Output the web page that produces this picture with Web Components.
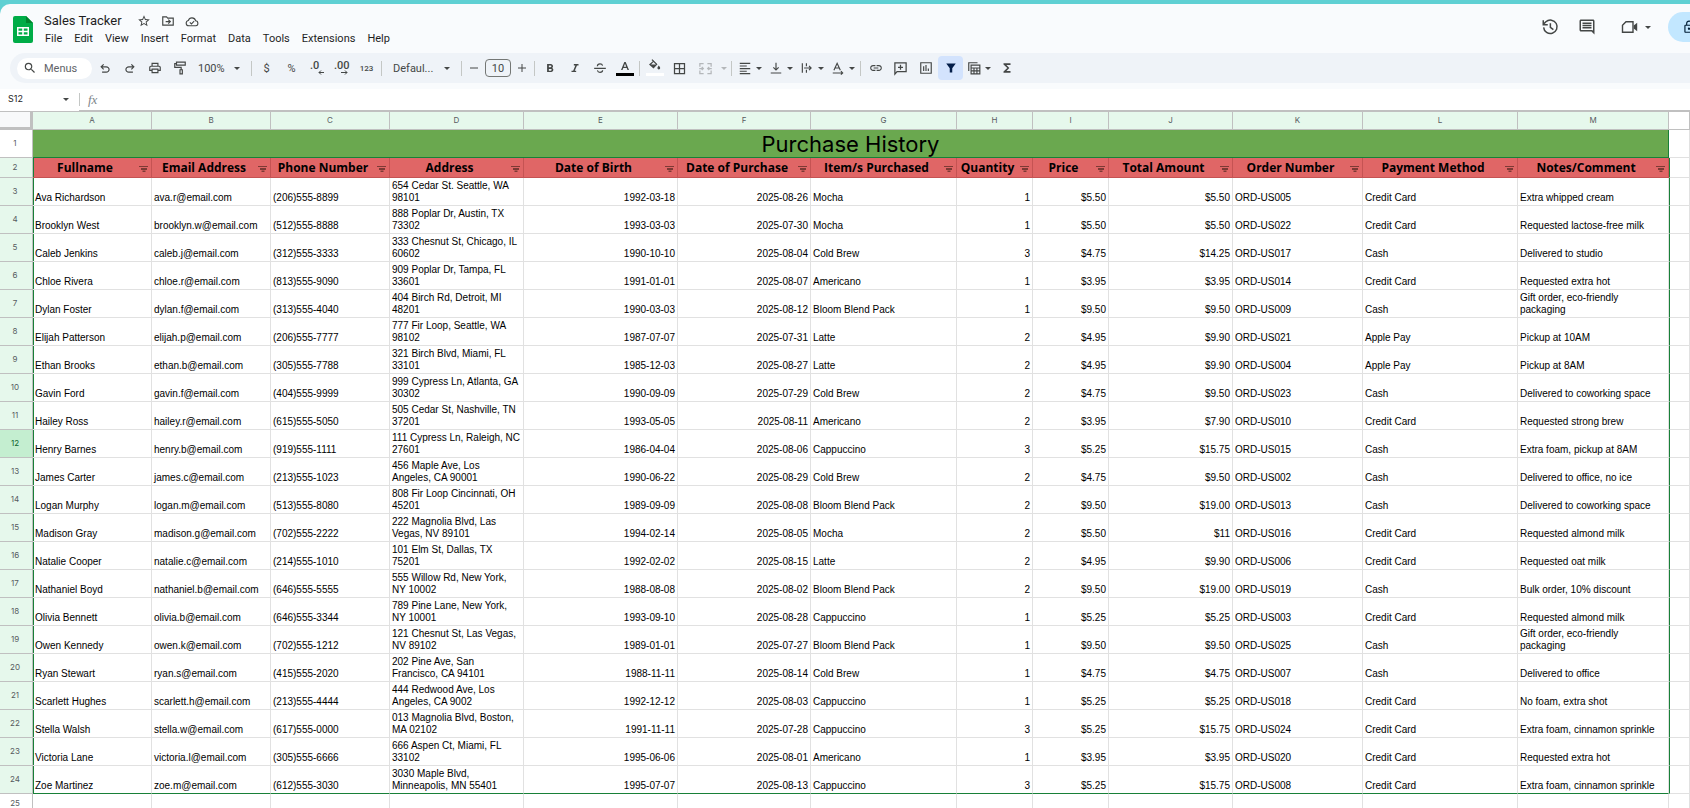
<!DOCTYPE html>
<html lang="en">
<head>
<meta charset="utf-8">
<title>Sales Tracker</title>
<style>
  html, body { margin: 0; height: 100%; }
  body { background: #5fd0d3; font-family: Roboto, "Liberation Sans", sans-serif; color: #1f1f1f; overflow: hidden; }
</style>
</head>
<body>
<sheet-app></sheet-app>
<script>
const define = (name, html, setup) => {
  const template = document.createElement('template');
  template.innerHTML = html;
  customElements.define(name, class extends HTMLElement {
    constructor() {
      super();
      this.attachShadow({ mode: 'open' }).append(template.content.cloneNode(true));
    }
    connectedCallback() { if (setup) setup(this, this.shadowRoot); }
  });
};

/* name: [viewBox width, viewBox height, markup] */
const fill = d => `<path fill="currentColor" d="${d}"/>`;
const line = (d, w = 2) => `<path fill="none" stroke="currentColor" stroke-width="${w}" d="${d}"/>`;
const ICONS = {
  sheets: [20, 27, '<path fill="#00ac47" d="M2 0h11l7 7v18a2 2 0 0 1-2 2H2a2 2 0 0 1-2-2V2a2 2 0 0 1 2-2z"/><path fill="#00832d" d="M13 0l7 7h-7z"/><path fill="#fff" fill-rule="evenodd" d="M4 11h12v9H4zM5.500 12.500v2.200h3.700v-2.200zM10.800 12.500v2.200h3.700v-2.200zM5.500 16.300v2.200h3.700v-2.200zM10.800 16.300v2.200h3.700v-2.200z"/>'],
  star: [24, 24, fill('M22 9.240l-7.190-.62L12 2 9.190 8.630 2 9.240l5.460 4.730L5.820 21 12 17.270 18.180 21l-1.630-7.030L22 9.240zM12 15.400l-3.760 2.270 1-4.280-3.320-2.880 4.380-.38L12 6.100l1.710 4.040 4.380.38-3.320 2.880 1 4.280L12 15.400z')],
  folder: [24, 24, line('M3 19V5h6.500l2 2H21v12z') + line('M8 13h7M12.500 9.500L16 13l-3.500 3.500')],
  cloud: [26, 20, line('M7 18a5 5 0 0 1-.8-9.900A7 7 0 0 1 19.600 8.500 4.800 4.800 0 0 1 20 18zM9 11.500l3 3 5-5')],
  history: [24, 24, line('M3.500 12.500A9 9 0 1 0 6.500 5L3 8.500M3 3v6h6M12.500 7v5.500l4 3')],
  comment: [24, 24, fill('M22 4c0-1.100-.9-2-2-2H4c-1.100 0-2 .9-2 2v12c0 1.100.9 2 2 2h14l4 4V4zM20 17l-1-1H4V4h16v13zM6 12h12v2H6zM6 9h12v2H6zM6 6h12v2H6z')],
  meet: [24, 20, line('M7 2.500h10v15H2V7.500z') + fill('M18 8l5-4v12l-5-4z')],
  lock: [24, 24, fill('M18 8h-1V6c0-2.760-2.240-5-5-5S7 3.240 7 6v2H6c-1.100 0-2 .9-2 2v10c0 1.100.9 2 2 2h12c1.100 0 2-.9 2-2V10c0-1.100-.9-2-2-2zM9 6c0-1.660 1.340-3 3-3s3 1.340 3 3v2H9V6zm9 14H6V10h12v10zm-6-3c1.100 0 2-.9 2-2s-.9-2-2-2-2 .9-2 2 .9 2 2 2z')],
  caret: [6, 3, fill('M0 0h6L3 3z')],
  search: [24, 24, fill('M15.500 14h-.79l-.28-.27A6.471 6.471 0 0 0 16 9.500 6.500 6.500 0 1 0 9.500 16c1.610 0 3.090-.59 4.230-1.570l.27.28v.79l5 4.990L20.490 19l-4.990-5zm-6 0C7.010 14 5 11.990 5 9.500S7.010 5 9.500 5 14 7.010 14 9.500 11.990 14 9.500 14z')],
  undo: [24, 24, fill('M7 20v-2h7.100q1.575 0 2.738-1T18 14.500T16.838 12T14.100 11H7.800l2.600 2.600L9 15L4 10l5-5l1.400 1.400L7.800 9h6.300q2.425 0 4.163 1.575T20 14.500t-1.737 3.925T14.100 20z')],
  redo: [24, 24, '<g transform="translate(24 0) scale(-1 1)">' + fill('M7 20v-2h7.100q1.575 0 2.738-1T18 14.500T16.838 12T14.100 11H7.800l2.600 2.600L9 15L4 10l5-5l1.400 1.400L7.800 9h6.300q2.425 0 4.163 1.575T20 14.500t-1.737 3.925T14.100 20z') + '</g>'],
  print: [24, 24, fill('M19 8h-1V3H6v5H5c-1.660 0-3 1.340-3 3v6h4v4h12v-4h4v-6c0-1.660-1.340-3-3-3zM8 5h8v3H8V5zm8 12v2H8v-4h8v2zm2-2v-2H6v2H4v-4c0-.55.45-1 1-1h14c.55 0 1 .45 1 1v4h-2z')],
  paint: [24, 24, line('M6 2h15v5H6zM6 4.500H3V11h11v4M12 15h4v7h-4z')],
  decless: [16, 16, '<text x="1" y="9" font-size="11" font-weight="500" fill="currentColor">.0</text>' + line('M15 12.500H10M12 10.500l-2 2 2 2', 1)],
  decmore: [16, 16, '<text x="0" y="9" font-size="11" font-weight="500" fill="currentColor">.00</text>' + line('M7 12.500h6M11 10.500l2 2-2 2', 1)],
  minus: [10, 10, line('M1 5h8', 1)],
  plus: [10, 10, line('M1 5h8M5 1v8', 1)],
  bold: [24, 24, fill('M15.600 11.790c.97-.67 1.650-1.770 1.650-2.790 0-2.260-1.750-4-4-4H7v14h7.040c2.090 0 3.710-1.700 3.710-3.790 0-1.520-.86-2.820-2.150-3.420zM10 7.500h3c.83 0 1.500.67 1.500 1.500s-.67 1.500-1.500 1.500h-3v-3zm3.500 9H10v-3h3.500c.83 0 1.500.67 1.500 1.500s-.67 1.500-1.500 1.500z')],
  italic: [24, 24, fill('M10 5v2.500h2.600L8.800 16.500H6V19h8v-2.500h-2.400L15.400 7.500H18V5z')],
  strike: [24, 24, line('M2 12.500h20M7.500 9c0-2.500 2-4 4.500-4s4 1.300 4.500 3M7.500 16c.5 2 2.200 3.500 4.500 3.500s4.500-1.300 4.500-3.500')],
  textcolor: [18, 18, fill('M5 11L8.300 3h1.400L13 11h-1.500l-.8-2H7.300l-.8 2zM7.800 7.800h2.400L9 4.700z') + '<path fill="#000" d="M0 14h18v3H0z"/>'],
  fillcolor: [18, 18, fill('M5.500 1l1-.8 5 5-4 4.300L3 5.500 6.800 2.300zM5 5.500h5L7.500 3zM12.800 6.500s1.400 1.600 1.400 2.500a1.400 1.400 0 0 1-2.800 0c0-.9 1.400-2.500 1.400-2.500z') + '<path fill="#fff" d="M0 14h18v3H0z"/>'],
  borders: [24, 24, line('M4 4h16v16H4zM12 4v16M4 12h16')],
  merge: [24, 24, line('M3 9V4h6M15 4h6v5M3 15v5h6M15 20h6v-5M2 12h6M22 12h-6M6 9.500L8.500 12 6 14.500M18 9.500L15.500 12l2.500 2.500')],
  align: [24, 24, line('M3 4h18M3 8.500h12M3 13h18M3 17.500h12M3 21.500h18')],
  valign: [24, 24, line('M3 20.500h18M12 3v12M7.500 11l4.500 4.500 4.500-4.500')],
  wrap: [24, 24, line('M4 4v16M11 4v5M11 15v5M7 12h12M15.500 8.500L19 12l-3.500 3.500')],
  rotate: [24, 24, line('M5 16L10.500 4 16 16M7 12h7M3 20.500h17M17 17.500l3 3-3 3')],
  link: [24, 24, fill('M3.900 12c0-1.710 1.390-3.100 3.100-3.100h4V7H7c-2.760 0-5 2.240-5 5s2.240 5 5 5h4v-1.900H7c-1.710 0-3.100-1.390-3.100-3.100zM8 13h8v-2H8v2zm9-6h-4v1.900h4c1.710 0 3.100 1.390 3.100 3.100s-1.390 3.100-3.100 3.100h-4V17h4c2.760 0 5-2.240 5-5s-2.240-5-5-5z')],
  addcomment: [24, 24, line('M3 21V3h18v14H6.500zM12 6v8M8 10h8')],
  chart: [24, 24, line('M3 3h18v18H3zM8 9v8M12 7v10M16 13v4')],
  filter: [24, 24, fill('M2.500 3h19L14.500 12.500V21h-5v-8.500z')],
  views: [24, 24, line('M3 17V3h15M7 7h15v15H7zM7 12h15M12 12v10M17 12v10M7 17h15')],
  sigma: [24, 24, fill('M18 4H6v2l6.500 6L6 18v2h12v-3h-7l5-5-5-5h7z')],
  sort: [9, 6, fill('M0 0h9v1H0zM2 2h6v2H2zM3.500 4.500h3V6h-3z')]
};
define('ui-icon', `<style>
  :host { display: inline-flex; flex: none; }
  svg { display: block; overflow: visible; font-family: Roboto, sans-serif; }
</style><svg aria-hidden="true"></svg>`, (host, root) => {
  const [w, h, body] = ICONS[host.getAttribute('name')];
  const width = +host.getAttribute('size') || w;
  const svg = root.querySelector('svg');
  svg.setAttribute('viewBox', `0 0 ${w} ${h}`);
  svg.setAttribute('width', width);
  svg.setAttribute('height', Math.round(width * h / w));
  svg.innerHTML = body;
});

define('tool-button', `<style>
  :host { display: flex; flex: none; width: 25px; height: 24px; }
  :host([narrow]) { width: 20px; }
  :host([menu]) { width: 31px; }
  :host([menu][disabled]) { width: 37px; }
  button { flex: 1; display: flex; align-items: center; justify-content: center; border: 0; padding: 0; background: none; font: inherit; color: #444746; border-radius: 4px; }
  :host([menu]) button { gap: 4px; }
  :host([menu][disabled]) button { gap: 8px; padding-left: 4px; }
  :host([disabled]) button { color: #b4b7ba; }
  :host([on]) button { background: #d3e3fd; color: #041e49; }
  .caret { display: none; }
  :host([menu]) .caret { display: inline-flex; }
</style><button type="button"><slot></slot><ui-icon class="caret" name="caret"></ui-icon></button>`, (host, root) => {
  const b = root.querySelector('button');
  b.setAttribute('aria-label', host.getAttribute('label'));
  b.disabled = host.hasAttribute('disabled');
});

define('tool-separator', `<style>
  :host { flex: none; width: 1px; height: 15px; margin: 0 2px; background: #c4c7c5; }
</style>`);

define('tool-select', `<style>
  :host { display: flex; flex: none; width: 57px; }
  :host([wide]) { width: 75px; }
  label { position: relative; flex: 1; display: flex; align-items: center; }
  select { appearance: none; flex: 1; min-width: 0; border: 0; background: none; margin: 0; padding: 0 16px 0 6px; height: 24px; font: inherit; color: #444746; }
  :host([wide]) select { padding-left: 9px; }
  ui-icon { position: absolute; right: 9px; color: #444746; pointer-events: none; }
</style><label><select></select><ui-icon name="caret"></ui-icon></label>`, (host, root) => {
  const s = root.querySelector('select');
  s.setAttribute('aria-label', host.getAttribute('label'));
  s.replaceChildren(new Option(host.getAttribute('value')));
});

define('app-header', `<style>
  :host { display: flex; justify-content: space-between; height: 49px; overflow: hidden; }
  .doc { display: flex; }
  .logo { margin: 12px 11px 0 13px; }
  .title { display: flex; align-items: center; gap: 10px; height: 20px; margin-top: 7px; }
  h1 { margin: 0 5px 0 0; font-size: 13px; line-height: 20px; font-weight: 400; color: #1f1f1f; }
  .title button, .actions button { border: 0; padding: 0; background: none; color: #444746; display: flex; align-items: center; }
  nav { display: flex; gap: 12px; margin-top: 1px; padding-left: 1px; }
  nav a { font-size: 11px; line-height: 14px; color: #1f1f1f; text-decoration: none; }
  .actions { flex: none; display: flex; align-items: center; width: 149px; height: 30px; margin-top: 8px; }
  .actions .history { margin-right: 19px; }
  .actions .meet { gap: 7px; margin-left: 25px; }
  .actions .share { flex: none; margin-left: 17px; width: 90px; height: 30px; padding-left: 14px; border-radius: 15px; background: #c2e7ff; color: #001d35; }
</style>
<div class="doc">
  <ui-icon class="logo" name="sheets"></ui-icon>
  <div>
    <div class="title"><h1>Sales Tracker</h1>
      <button type="button" aria-label="Star"><ui-icon name="star" size="14"></ui-icon></button>
      <button type="button" aria-label="Move"><ui-icon name="folder" size="14"></ui-icon></button>
      <button type="button" aria-label="Document status"><ui-icon name="cloud" size="14"></ui-icon></button>
    </div>
    <nav><a href="#">File</a><a href="#">Edit</a><a href="#">View</a><a href="#">Insert</a><a href="#">Format</a><a href="#">Data</a><a href="#">Tools</a><a href="#">Extensions</a><a href="#">Help</a></nav>
  </div>
</div>
<div class="actions">
  <button type="button" class="history" aria-label="Version history"><ui-icon name="history" size="18"></ui-icon></button>
  <button type="button" aria-label="Comments"><ui-icon name="comment" size="18"></ui-icon></button>
  <button type="button" class="meet" aria-label="Join a call"><ui-icon name="meet" size="17"></ui-icon><ui-icon name="caret"></ui-icon></button>
  <button type="button" class="share" aria-label="Share"><ui-icon name="lock" size="14"></ui-icon></button>
</div>`);

define('tool-bar', `<style>
  :host { display: flex; align-items: center; height: 30px; margin-left: 10px; padding-left: 7px; border-radius: 15px 0 0 15px; background: #eff3f8; font-size: 11px; color: #444746; }
  .search { display: flex; align-items: center; gap: 7px; flex: none; box-sizing: border-box; width: 75px; height: 21px; padding-left: 6px; border-radius: 11px; background: #fff; }
  .search input { border: 0; padding: 0; background: none; width: 34px; font: inherit; color: #444746; outline: 0; }
  .search input::placeholder { color: #5f6368; opacity: 1; }
  .size { box-sizing: border-box; width: 26px; height: 18px; margin: 0 1px; padding: 0; border: 1px solid #747775; border-radius: 4px; background: none; text-align: center; font: inherit; color: #444746; }
  .small { font-size: 8px; font-weight: 500; }
</style>
<label class="search"><ui-icon name="search" size="14"></ui-icon><input type="text" placeholder="Menus" aria-label="Menus"></label>
<tool-button label="Undo"><ui-icon name="undo" size="14"></ui-icon></tool-button>
<tool-button label="Redo"><ui-icon name="redo" size="14"></ui-icon></tool-button>
<tool-button label="Print"><ui-icon name="print" size="14"></ui-icon></tool-button>
<tool-button label="Paint format"><ui-icon name="paint" size="14"></ui-icon></tool-button>
<tool-select label="Zoom" value="100%"></tool-select>
<tool-separator></tool-separator>
<tool-button label="Currency">$</tool-button>
<tool-button label="Percent">%</tool-button>
<tool-button label="Decrease decimal places"><ui-icon name="decless"></ui-icon></tool-button>
<tool-button label="Increase decimal places"><ui-icon name="decmore"></ui-icon></tool-button>
<tool-button label="More formats" class="small">123</tool-button>
<tool-separator></tool-separator>
<tool-select wide label="Font" value="Defaul..."></tool-select>
<tool-separator></tool-separator>
<tool-button narrow label="Decrease font size"><ui-icon name="minus"></ui-icon></tool-button>
<input class="size" type="text" value="10" aria-label="Font size">
<tool-button narrow label="Increase font size"><ui-icon name="plus"></ui-icon></tool-button>
<tool-separator></tool-separator>
<tool-button label="Bold"><ui-icon name="bold" size="14"></ui-icon></tool-button>
<tool-button label="Italic"><ui-icon name="italic" size="14"></ui-icon></tool-button>
<tool-button label="Strikethrough"><ui-icon name="strike" size="14"></ui-icon></tool-button>
<tool-button label="Text color"><ui-icon name="textcolor"></ui-icon></tool-button>
<tool-separator></tool-separator>
<tool-button label="Fill color"><ui-icon name="fillcolor"></ui-icon></tool-button>
<tool-button label="Borders"><ui-icon name="borders" size="15"></ui-icon></tool-button>
<tool-button menu disabled label="Merge cells"><ui-icon name="merge" size="15"></ui-icon></tool-button>
<tool-separator></tool-separator>
<tool-button menu label="Horizontal align"><ui-icon name="align" size="14"></ui-icon></tool-button>
<tool-button menu label="Vertical align"><ui-icon name="valign" size="14"></ui-icon></tool-button>
<tool-button menu label="Text wrapping"><ui-icon name="wrap" size="14"></ui-icon></tool-button>
<tool-button menu label="Text rotation"><ui-icon name="rotate" size="14"></ui-icon></tool-button>
<tool-separator></tool-separator>
<tool-button label="Insert link"><ui-icon name="link" size="14"></ui-icon></tool-button>
<tool-button label="Insert comment"><ui-icon name="addcomment" size="15"></ui-icon></tool-button>
<tool-button label="Insert chart"><ui-icon name="chart" size="14"></ui-icon></tool-button>
<tool-button on label="Create a filter"><ui-icon name="filter" size="12"></ui-icon></tool-button>
<tool-button menu label="Filter views"><ui-icon name="views" size="14"></ui-icon></tool-button>
<tool-button label="Functions"><ui-icon name="sigma" size="14"></ui-icon></tool-button>`);

define('formula-bar', `<style>
  :host { display: flex; height: 23px; margin-top: 6px; background: #fff; }
  .name { display: flex; align-items: center; width: 79px; box-sizing: border-box; padding: 0 10px 2px 8px; border-bottom: 1px solid #c0c0c0; }
  .name input { flex: 1; min-width: 0; border: 0; padding: 0; font: 9px/12px Inter, sans-serif; color: #1f1f1f; background: none; }
  .name button { border: 0; padding: 0; background: none; display: flex; color: #444746; }
  .formula { flex: 1; display: flex; align-items: center; border-bottom: 2px solid #c0c0c0; }
  .formula::before { content: ""; width: 1px; height: 13px; margin-right: 8px; background: #c4c7c5; }
  .fx { font: italic 13px/16px "Liberation Serif", serif; color: #80868b; }
  .formula input { flex: 1; border: 0; padding: 0 8px; font: inherit; background: none; }
</style>
<div class="name"><input type="text" value="S12" aria-label="Name box"><button type="button" aria-label="Named ranges"><ui-icon name="caret"></ui-icon></button></div>
<label class="formula"><span class="fx">fx</span><input type="text" aria-label="Formula"></label>`);

const COLUMNS = [119, 119, 119, 134, 154, 133, 146, 76, 76, 124, 130, 155, 151];
const HEADINGS = ['Fullname', 'Email Address', 'Phone Number', 'Address', 'Date of Birth', 'Date of Purchase', 'Item/s Purchased', 'Quantity', 'Price', 'Total Amount', 'Order Number', 'Payment Method', 'Notes/Comment'];
const RECORDS = `Ava Richardson|ava.r|(206)555-8899|654 Cedar St. Seattle, WA/98101|1992-03-18|2025-08-26|Mocha|1|$5.50|$5.50|005|Credit Card|Extra whipped cream
Brooklyn West|brooklyn.w|(512)555-8888|888 Poplar Dr, Austin, TX/73302|1993-03-03|2025-07-30|Mocha|1|$5.50|$5.50|022|Credit Card|Requested lactose-free milk
Caleb Jenkins|caleb.j|(312)555-3333|333 Chesnut St, Chicago, IL/60602|1990-10-10|2025-08-04|Cold Brew|3|$4.75|$14.25|017|Cash|Delivered to studio
Chloe Rivera|chloe.r|(813)555-9090|909 Poplar Dr, Tampa, FL/33601|1991-01-01|2025-08-07|Americano|1|$3.95|$3.95|014|Credit Card|Requested extra hot
Dylan Foster|dylan.f|(313)555-4040|404 Birch Rd, Detroit, MI/48201|1990-03-03|2025-08-12|Bloom Blend Pack|1|$9.50|$9.50|009|Cash|Gift order, eco-friendly/packaging
Elijah Patterson|elijah.p|(206)555-7777|777 Fir Loop, Seattle, WA/98102|1987-07-07|2025-07-31|Latte|2|$4.95|$9.90|021|Apple Pay|Pickup at 10AM
Ethan Brooks|ethan.b|(305)555-7788|321 Birch Blvd, Miami, FL/33101|1985-12-03|2025-08-27|Latte|2|$4.95|$9.90|004|Apple Pay|Pickup at 8AM
Gavin Ford|gavin.f|(404)555-9999|999 Cypress Ln, Atlanta, GA/30302|1990-09-09|2025-07-29|Cold Brew|2|$4.75|$9.50|023|Cash|Delivered to coworking space
Hailey Ross|hailey.r|(615)555-5050|505 Cedar St, Nashville, TN/37201|1993-05-05|2025-08-11|Americano|2|$3.95|$7.90|010|Credit Card|Requested strong brew
Henry Barnes|henry.b|(919)555-1111|111 Cypress Ln, Raleigh, NC/27601|1986-04-04|2025-08-06|Cappuccino|3|$5.25|$15.75|015|Cash|Extra foam, pickup at 8AM
James Carter|james.c|(213)555-1023|456 Maple Ave, Los/Angeles, CA 90001|1990-06-22|2025-08-29|Cold Brew|2|$4.75|$9.50|002|Cash|Delivered to office, no ice
Logan Murphy|logan.m|(513)555-8080|808 Fir Loop Cincinnati, OH/45201|1989-09-09|2025-08-08|Bloom Blend Pack|2|$9.50|$19.00|013|Cash|Delivered to coworking space
Madison Gray|madison.g|(702)555-2222|222 Magnolia Blvd, Las/Vegas, NV 89101|1994-02-14|2025-08-05|Mocha|2|$5.50|$11|016|Credit Card|Requested almond milk
Natalie Cooper|natalie.c|(214)555-1010|101 Elm St, Dallas, TX/75201|1992-02-02|2025-08-15|Latte|2|$4.95|$9.90|006|Credit Card|Requested oat milk
Nathaniel Boyd|nathaniel.b|(646)555-5555|555 Willow Rd, New York,/NY 10002|1988-08-08|2025-08-02|Bloom Blend Pack|2|$9.50|$19.00|019|Cash|Bulk order, 10% discount
Olivia Bennett|olivia.b|(646)555-3344|789 Pine Lane, New York,/NY 10001|1993-09-10|2025-08-28|Cappuccino|1|$5.25|$5.25|003|Credit Card|Requested almond milk
Owen Kennedy|owen.k|(702)555-1212|121 Chesnut St, Las Vegas,/NV 89102|1989-01-01|2025-07-27|Bloom Blend Pack|1|$9.50|$9.50|025|Cash|Gift order, eco-friendly/packaging
Ryan Stewart|ryan.s|(415)555-2020|202 Pine Ave, San/Francisco, CA 94101|1988-11-11|2025-08-14|Cold Brew|1|$4.75|$4.75|007|Cash|Delivered to office
Scarlett Hughes|scarlett.h|(213)555-4444|444 Redwood Ave, Los/Angeles, CA 9002|1992-12-12|2025-08-03|Cappuccino|1|$5.25|$5.25|018|Credit Card|No foam, extra shot
Stella Walsh|stella.w|(617)555-0000|013 Magnolia Blvd, Boston,/MA 02102|1991-11-11|2025-07-28|Cappuccino|3|$5.25|$15.75|024|Credit Card|Extra foam, cinnamon sprinkle
Victoria Lane|victoria.l|(305)555-6666|666 Aspen Ct, Miami, FL/33102|1995-06-06|2025-08-01|Americano|1|$3.95|$3.95|020|Credit Card|Requested extra hot
Zoe Martinez|zoe.m|(612)555-3030|3030 Maple Blvd,/Minneapolis, MN 55401|1995-07-07|2025-08-13|Cappuccino|3|$5.25|$15.75|008|Credit Card|Extra foam, cinnamon sprinkle`
  .split('\n').map(r => r.split('|').map((v, i) => i === 1 ? v + '@email.com' : i === 10 ? 'ORD-US' + v : v.replace('/', '\n')));

define('sheet-grid', `<style>
  :host { display: block; flex: 1; min-height: 0; overflow: hidden; background: #fff; }
  table { table-layout: fixed; width: 100%; border-collapse: separate; border-spacing: 0; font: 10px/12px "Liberation Sans", Arial, sans-serif; color: #000; }
  .stub { width: 33px; }
  th, td { box-sizing: border-box; padding: 0; border: 0 solid #e1e1e1; border-width: 0 1px 1px 0; }
  .letters th { height: 18px; }
  .letters th, th.row { border-color: #c0c0c0; background: #e6f8ec; font: 8px/10px Inter, sans-serif; color: #575b5f; }
  .letters th.plain, th.row.plain { background: #fff; }
  .letters .corner { background: #f8f9fa; border-width: 0 3px 3px 0; }
  th.row { padding: 0 2px 2px 0; }
  .letters th { padding-bottom: 1px; }
  th.row.active { background: #c4eed0; color: #0d652d; }
  .title > * { height: 28px; }
  .title .band { background: #6aa84f; text-align: center; font: 400 22px/26px Inter, sans-serif; border-color: #188038; }
  .heads > * { height: 20px; }
  .heads .head { background: #e06666; border-color: #c55353; font: 700 12px/18px "Open Sans", sans-serif; }
  .head div { display: flex; align-items: center; padding-right: 3px; }
  .head span { flex: 1; text-align: center; padding-right: 2px; white-space: nowrap; }
  .head button { flex: none; display: flex; padding: 3px 0 0; border: 0; background: none; color: #7d3a35; }
  .record > * { height: 28px; }
  .record td { vertical-align: bottom; padding: 0 2px 1px; white-space: pre; }
  .record td.num { text-align: right; }
  .inrange > :nth-child(2) { box-shadow: inset 1px 0 #188038; }
  .inrange > :last-child { border-left: 1px solid #188038; }
  .last > td:not(:last-child) { border-bottom-color: #188038; }
  .blank > * { height: 21px; }
</style>
<table><colgroup><col class="stub"></colgroup><thead></thead><tbody></tbody></table>`, (host, root) => {
  const group = root.querySelector('colgroup');
  COLUMNS.forEach(w => { const c = document.createElement('col'); c.style.width = w + 'px'; group.append(c); });
  group.append(document.createElement('col'));
  const stub = (n, cls = '') => `<th scope="row" class="row ${cls}">${n}</th>`;
  root.querySelector('thead').innerHTML =
    `<tr class="letters"><th class="corner"></th>${[...'ABCDEFGHIJKLM'].map(l => `<th scope="col">${l}</th>`).join('')}<th class="plain"></th></tr>`;
  const numeric = new Set([4, 5, 7, 8, 9]);
  root.querySelector('tbody').innerHTML =
    `<tr class="title">${stub(1, 'plain')}<td class="band" colspan="13">Purchase History</td><td></td></tr>` +
    `<tr class="heads inrange">${stub(2)}${HEADINGS.map(h => `<th scope="col" class="head"><div><span>${h}</span><button type="button" aria-label="Filter ${h}"><ui-icon name="sort"></ui-icon></button></div></th>`).join('')}<td></td></tr>` +
    RECORDS.map((r, i) => `<tr class="record inrange${i === RECORDS.length - 1 ? ' last' : ''}">${stub(i + 3, i === 9 ? 'active' : '')}${r.map((v, c) => `<td${numeric.has(c) ? ' class="num"' : ''}>${v}</td>`).join('')}<td></td></tr>`).join('') +
    `<tr class="blank">${stub(25, 'plain')}${'<td></td>'.repeat(14)}</tr>`;
});

define('sheet-app', `<style>
  :host { display: flex; flex-direction: column; box-sizing: border-box; height: 100vh; padding-top: 4px; }
  main { flex: 1; min-height: 0; display: flex; flex-direction: column; background: #f9fbfd; border-radius: 10px 0 0 0; overflow: hidden; }
</style>
<main><app-header></app-header><tool-bar></tool-bar><formula-bar></formula-bar><sheet-grid></sheet-grid></main>`);
</script>
</body>
</html>
